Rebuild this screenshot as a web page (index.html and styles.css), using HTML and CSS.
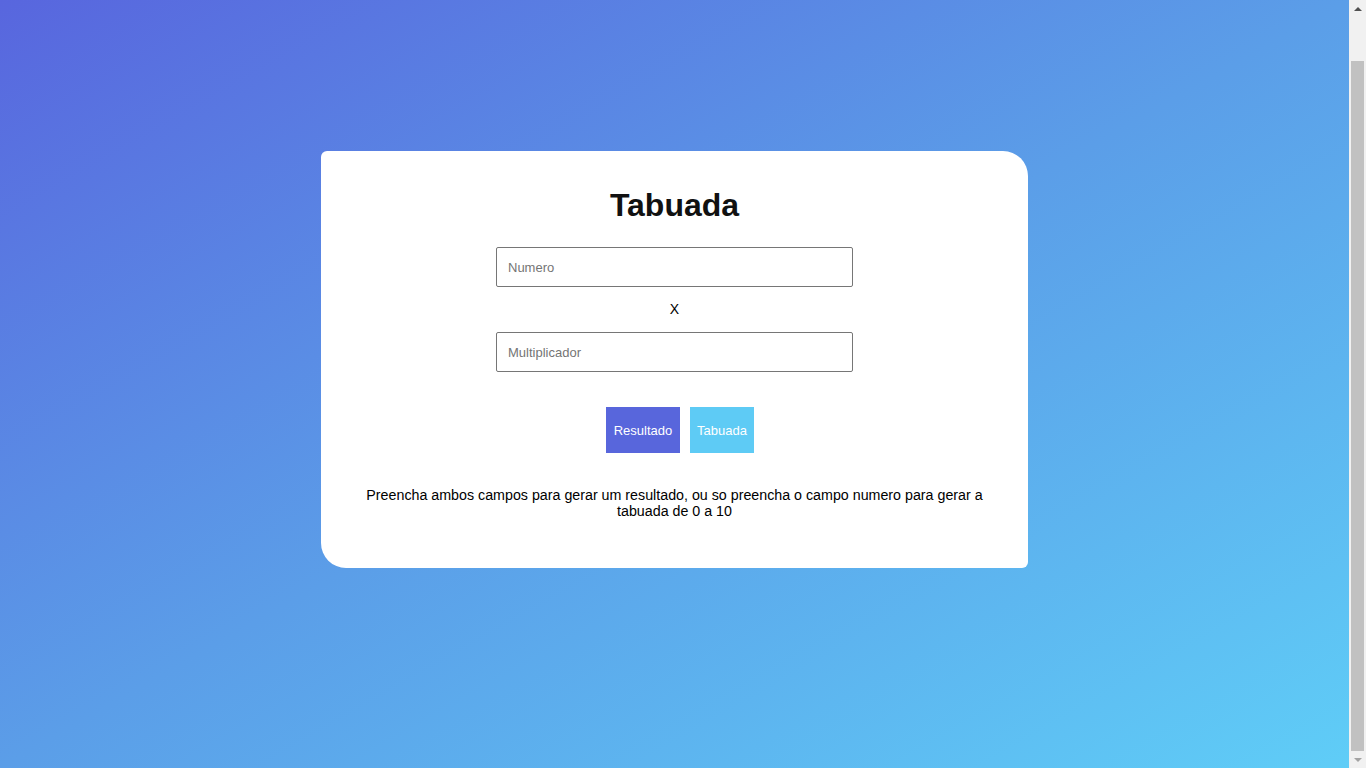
FILE: index.html
```html
<!DOCTYPE html>
<html lang="pt-BR">
<head>
<meta charset="utf-8">
<title>Tabuada</title>
<link rel="stylesheet" href="styles.css">
</head>
<body>
<main class="page">
  <section class="card">
    <h1 class="title">Tabuada</h1>
    <input class="field" type="text" placeholder="Numero">
    <div class="times">X</div>
    <input class="field" type="text" placeholder="Multiplicador">
    <div class="actions">
      <button class="btn btn-result" type="button">Resultado</button>
      <button class="btn btn-table" type="button">Tabuada</button>
    </div>
    <p class="hint">Preencha ambos campos para gerar um resultado, ou so preencha o campo numero para gerar a tabuada de 0 a 10</p>
  </section>
</main>
<aside class="scrollbar" aria-hidden="true">
  <div class="sb-arrow"><span class="tri tri-up"></span></div>
  <div class="sb-track"><div class="sb-thumb"></div></div>
  <div class="sb-arrow"><span class="tri tri-down"></span></div>
</aside>
</body>
</html>
```
FILE: styles.css
```css
html, body {
  height: 100%;
}
body {
  margin: 0;
  display: flex;
  overflow: hidden;
  font-family: "Liberation Sans", Arial, sans-serif;
}
.page {
  flex: 1;
  height: 768px;
  box-sizing: border-box;
  display: flex;
  justify-content: center;
  align-items: flex-start;
  padding-top: 151px;
  background: linear-gradient(to bottom right, #5866de 0%, #5b9ee8 50%, #5fcdf7 100%);
}
.card {
  box-sizing: border-box;
  width: 707px;
  background: #fff;
  border-radius: 6px 25px 6px 25px;
  padding: 36px 40px 49px;
  display: flex;
  flex-direction: column;
  align-items: center;
}
.title {
  margin: 0 0 23px;
  font-size: 32px;
  line-height: 37px;
  font-weight: bold;
  color: #111;
}
.field {
  box-sizing: border-box;
  width: 357px;
  height: 40px;
  margin: 0;
  padding: 0 11px;
  border: 1px solid #767676;
  border-radius: 2px;
  font-family: "Liberation Sans", Arial, sans-serif;
  font-size: 13px;
  color: #000;
  background: #fff;
}
.field::placeholder {
  color: #757575;
}
.times {
  font-size: 14px;
  line-height: 45px;
  color: #000;
}
.actions {
  display: flex;
  gap: 10px;
  margin-top: 35px;
  padding-left: 11px;
}
.btn {
  border: none;
  margin: 0;
  padding: 0;
  height: 46px;
  font-family: "Liberation Sans", Arial, sans-serif;
  font-size: 13px;
  color: #fff;
  cursor: pointer;
}
.btn-result {
  width: 74px;
  background: #5866dc;
}
.btn-table {
  width: 64px;
  background: #5ecbf5;
}
.hint {
  margin: 34px 0 0;
  font-size: 14.25px;
  line-height: 16px;
  text-align: center;
  color: #000;
}
.scrollbar {
  width: 17px;
  height: 768px;
  flex: none;
  background: #f1f1f1;
  display: flex;
  flex-direction: column;
}
.sb-arrow {
  height: 17px;
  display: flex;
  align-items: center;
  justify-content: center;
}
.tri {
  width: 0;
  height: 0;
  border-left: 4px solid transparent;
  border-right: 4px solid transparent;
}
.tri-up {
  border-bottom: 4px solid #505050;
}
.tri-down {
  border-top: 4px solid #a3a3a3;
}
.sb-track {
  flex: 1;
  padding: 44px 2px 0;
}
.sb-thumb {
  height: 690px;
  background: #c1c1c1;
}
```
